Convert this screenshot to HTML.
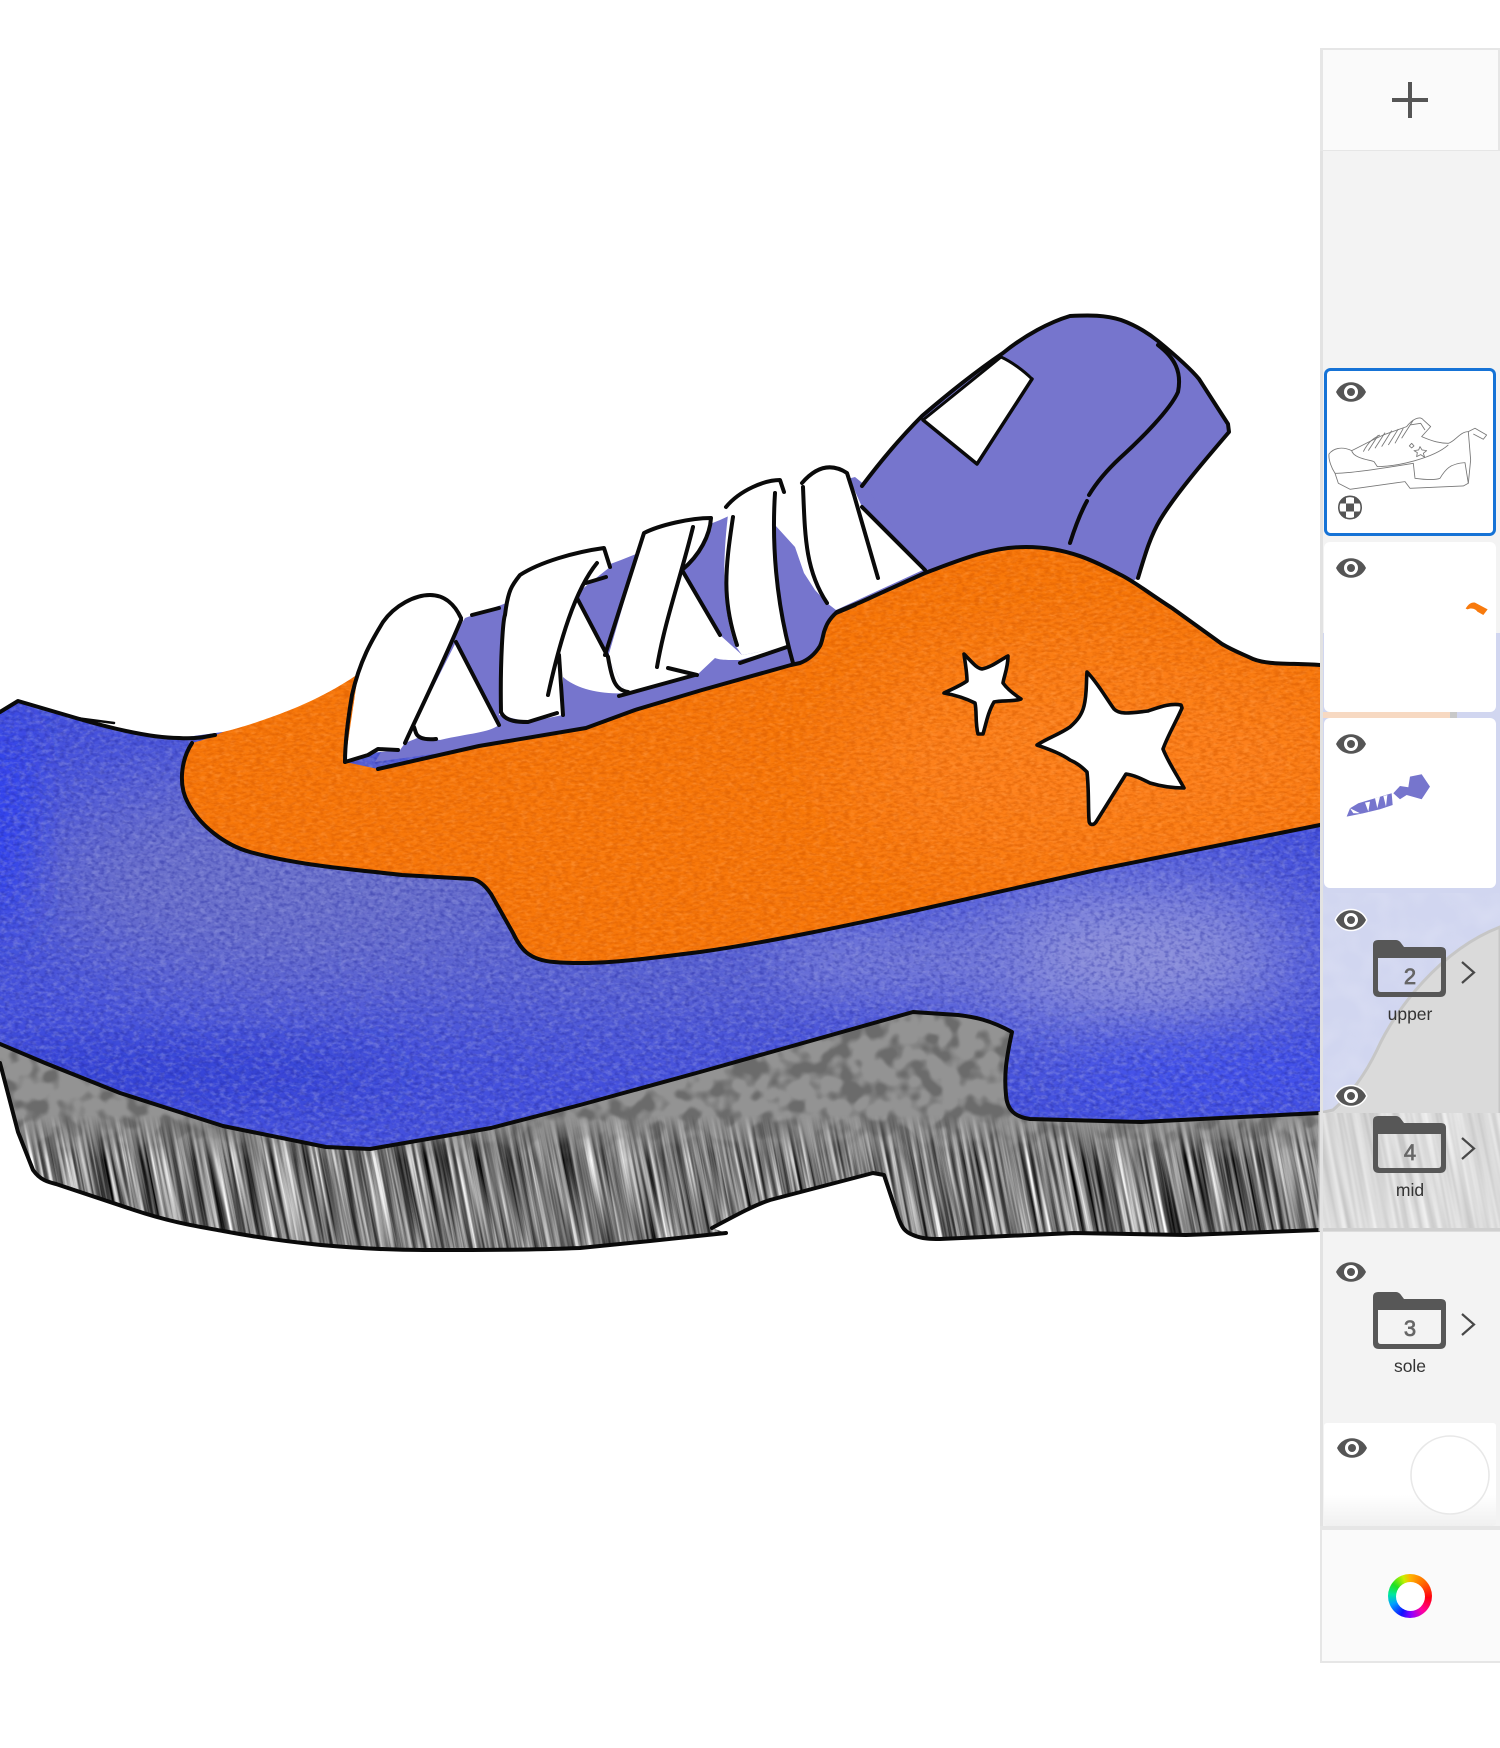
<!DOCTYPE html>
<html><head><meta charset="utf-8"><style>
html,body{margin:0;padding:0;background:#fff;width:1500px;height:1748px;overflow:hidden}
svg{display:block;font-family:"Liberation Sans",sans-serif}
#wheel{position:absolute;left:1388px;top:1574px;width:44px;height:44px;border-radius:50%;background:conic-gradient(#ffb400 0deg,#ff6a00 45deg,#ff0010 95deg,#ff00a0 140deg,#9000ff 175deg,#1010ff 205deg,#00a0ff 245deg,#00e8a0 275deg,#20e020 305deg,#c8f000 340deg,#ffb400 360deg)}
#wheel:after{content:"";position:absolute;left:7.5px;top:7.5px;width:29px;height:29px;border-radius:50%;background:#fff}
</style></head><body>
<svg width="1500" height="1748" viewBox="0 0 1500 1748" xmlns="http://www.w3.org/2000/svg">
<defs>
<filter id="nOrange" color-interpolation-filters="sRGB" x="0" y="0" width="100%" height="100%"><feTurbulence type="fractalNoise" baseFrequency="0.16 0.36" numOctaves="3" seed="4"/><feColorMatrix values="0 0 0 0 .85  0 0 0 0 .36  0 0 0 0 0  2.8 0 0 0 -1.1"/></filter>
<filter id="nOrangeL" color-interpolation-filters="sRGB" x="0" y="0" width="100%" height="100%"><feTurbulence type="fractalNoise" baseFrequency="0.14 0.3" numOctaves="2" seed="9"/><feColorMatrix values="0 0 0 0 1  0 0 0 0 .6  0 0 0 0 .26  2.6 0 0 0 -1.15"/></filter>
<filter id="nBlue" color-interpolation-filters="sRGB" x="0" y="0" width="100%" height="100%"><feTurbulence type="fractalNoise" baseFrequency="0.15 0.24" numOctaves="3" seed="7"/><feColorMatrix values="0 0 0 0 .6  0 0 0 0 .62  0 0 0 0 .88  2.8 0 0 0 -1.2"/></filter>
<filter id="nBlueD" color-interpolation-filters="sRGB" x="0" y="0" width="100%" height="100%"><feTurbulence type="fractalNoise" baseFrequency="0.2 0.28" numOctaves="2" seed="3"/><feColorMatrix values="0 0 0 0 .14  0 0 0 0 .16  0 0 0 0 .62  2.8 0 0 0 -1.25"/></filter>
<filter id="nGray" color-interpolation-filters="sRGB" x="0" y="0" width="100%" height="100%"><feTurbulence type="fractalNoise" baseFrequency="0.05" numOctaves="2" seed="12"/><feColorMatrix values="0 0 0 0 .42  0 0 0 0 .42  0 0 0 0 .42  6 0 0 0 -2.8"/><feGaussianBlur stdDeviation=".8"/></filter>
<filter id="nStreak" color-interpolation-filters="sRGB" x="0" y="0" width="100%" height="100%"><feTurbulence type="fractalNoise" baseFrequency="0.22 0.005" numOctaves="3" seed="6"/><feColorMatrix values="1.5 0 0 0 -.26 1.5 0 0 0 -.26 1.5 0 0 0 -.26 0 0 0 0 1"/></filter>
<filter id="nStreakL" color-interpolation-filters="sRGB" x="0" y="0" width="100%" height="100%"><feTurbulence type="fractalNoise" baseFrequency="0.16 0.005" numOctaves="2" seed="11"/><feColorMatrix values=".28 0 0 0 .72 .28 0 0 0 .72 .28 0 0 0 .72 0 0 0 0 1"/></filter>
<filter id="nFrost" color-interpolation-filters="sRGB" x="0" y="0" width="100%" height="100%"><feTurbulence type="fractalNoise" baseFrequency="0.04" numOctaves="2" seed="5"/><feColorMatrix values="0 0 0 0 1 0 0 0 0 1 0 0 0 0 1 1.6 0 0 0 -.6"/></filter>
<filter id="b40" x="-60%" y="-60%" width="220%" height="220%"><feGaussianBlur stdDeviation="46"/></filter>
<filter id="b25" x="-60%" y="-60%" width="220%" height="220%"><feGaussianBlur stdDeviation="26"/></filter>
<linearGradient id="sm" x1="0" y1="0" x2="0" y2="1"><stop offset="0" stop-color="#000"/><stop offset="1" stop-color="#fff"/></linearGradient>
<mask id="stripeMask" maskUnits="userSpaceOnUse" x="0" y="1000" width="1320" height="260"><rect x="0" y="1000" width="1320" height="115" fill="#000"/><rect x="0" y="1115" width="1320" height="45" fill="url(#sm)"/><rect x="0" y="1160" width="1320" height="100" fill="#fff"/></mask>
<clipPath id="soleClip"><path d="M0,1043 L0,1063 L18,1132 L33,1170 C40,1180 48,1182 56,1184 L134,1210 C170,1222 195,1226 223,1231 C260,1238 290,1242 321,1245 C355,1248 390,1250 424,1250 C480,1250 530,1250 580,1248 L650,1241 L726,1233 L712,1228 C740,1213 755,1205 770,1200 L873,1173 L884,1175 L898,1217 C902,1228 905,1232 913,1235 C922,1239 932,1239 940,1239 L1074,1233 L1186,1235 L1320,1230 L1320,1100 L1000,1000 L650,1000 L200,1060 Z"/></clipPath>
<clipPath id="blueClip"><path d="M0,712 L18,701 L76,718 C110,728 150,738 179,738 L223,732 L1000,780 L1320,800 L1320,1113 L1141,1122 L1030,1119 C1015,1117 1007,1110 1006,1095 C1004,1075 1006,1060 1012,1032 C990,1020 975,1017 958,1015 L913,1012 L700,1072 L580,1105 L491,1128 L370,1149 L326,1147 L223,1126 L120,1093 L45,1063 L0,1044 Z"/></clipPath>
<clipPath id="orangeClip"><path d="M192,743 C181,760 178,785 188,803 C200,826 225,845 250,852 C300,866 360,870 402,875 L473,879 C483,882 488,890 491,894 L513,933 C520,948 528,960 554,962 C600,966 650,958 700,952 C770,942 850,925 918,910 L1096,870 L1320,825 L1320,665 C1290,663 1268,665 1253,659 C1240,653 1232,650 1222,644 L1172,608 C1150,594 1135,582 1121,575 C1100,564 1070,547 1026,547 C990,547 960,560 925,573 L861,602 C850,606 842,608 837,612 C828,620 826,626 824,632 C822,640 822,642 820,646 C815,654 808,660 800,663 L791,665 L702,690 L635,710 L586,728 L479,746 L378,769 L345,762 L358,674 C335,690 310,702 290,710 C265,720 240,728 223,732 C210,738 200,741 192,743Z"/></clipPath>
<clipPath id="frostClip"><rect x="1323" y="1113" width="177" height="117"/></clipPath>
<g id="eye"><path d="M-15,0 C-9,-13 9,-13 15,0 C9,13 -9,13 -15,0Z" fill="#555"/><circle r="7" fill="#fff"/><circle r="4" fill="#555"/></g>
<g id="eyeH"><path d="M-15,0 C-9,-13 9,-13 15,0 C9,13 -9,13 -15,0Z" fill="#555" stroke="#fff" stroke-width="3" paint-order="stroke"/><circle r="7" fill="#fff"/><circle r="4" fill="#555"/></g>
<path id="folder" fill-rule="evenodd" fill="#575757" d="M1373,945 q0,-5 5,-5 h18 q3,0 5,3 l3,4 h37 q5,0 5,5 v39 q0,6 -6,6 h-61 q-6,0 -6,-6 z M1378,958 v31 q0,3 3,3 h57 q3,0 3,-3 v-31 z"/>
<path id="chev" d="M1462,962 L1474,972.5 L1462,983" fill="none" stroke="#484848" stroke-width="2.2" stroke-linejoin="miter"/>
</defs>

<rect width="1500" height="1748" fill="#fff"/>

<!-- sole -->
<g clip-path="url(#soleClip)">
<rect x="0" y="1000" width="1320" height="260" fill="#939393"/>
<rect x="0" y="1000" width="1320" height="260" filter="url(#nGray)"/>
<g mask="url(#stripeMask)"><g transform="rotate(-11 660 1130)"><rect x="-60" y="900" width="1440" height="460" filter="url(#nStreak)"/></g></g>
</g>

<!-- blue upper -->
<g clip-path="url(#blueClip)">
<rect x="0" y="680" width="1320" height="480" fill="#4450dd"/>
<ellipse cx="300" cy="880" rx="270" ry="115" fill="#6b70cb" filter="url(#b40)"/>
<ellipse cx="650" cy="960" rx="240" ry="55" fill="#5f66cf" filter="url(#b40)"/>
<ellipse cx="1130" cy="955" rx="170" ry="70" fill="#9598da" filter="url(#b40)"/>
<ellipse cx="900" cy="960" rx="130" ry="40" fill="#7379d8" filter="url(#b25)"/>
<ellipse cx="1220" cy="1075" rx="160" ry="30" fill="#3f4fee" filter="url(#b25)"/>
<ellipse cx="0" cy="820" rx="26" ry="110" fill="#2c3cf4" filter="url(#b25)"/>
<ellipse cx="170" cy="1075" rx="220" ry="22" fill="#2f3cd4" filter="url(#b25)"/>
<rect x="0" y="680" width="1320" height="480" filter="url(#nBlue)" opacity=".42"/>
<rect x="0" y="680" width="1320" height="480" filter="url(#nBlueD)" opacity=".4"/>
</g>

<!-- tongue / purple -->
<path d="M862,486 C880,462 900,438 922,416 C950,392 975,372 1003,353 C1025,335 1050,322 1070,316 C1090,315 1105,315 1121,320 C1135,325 1148,333 1158,341 C1175,355 1190,368 1199,379 L1228,424 L1229,432 C1205,460 1175,495 1160,520 C1150,537 1145,555 1138,578 L1100,600 L925,580 Z" fill="#7675cd"/>
<path d="M375,762 L465,618 L501,605 L621,560 L720,520 L775,495 L805,490 L855,477 L866,486 L925,575 L840,620 L820,650 L800,668 L702,692 L586,730 L478,748 Z" fill="#7675cd"/>
<path d="M923,420 L1001,357 C1012,362 1024,371 1032,379 L977,464Z" fill="#fff"/>

<!-- laces -->
<g fill="#fff">
<path d="M345,760 C347,720 352,690 363,670 C372,640 378,630 385,623 C400,605 415,595 430,595 C445,595 455,605 461,620 L405,743 L400,750 L371,753 Z"/>
<path d="M456,642 L499,725 C488,733 470,733 440,740 L420,737 L405,743 Z"/>
<path d="M499,715 C502,660 503,630 505,613 C508,590 515,582 519,577 C540,562 575,552 604,548 L610,567 L581,590 L577,598 L608,657 L626,693 C600,695 575,688 563,677 L563,715 L528,722 Z"/>
<path d="M608,657 L644,533 C660,525 690,518 711,518 C710,535 700,555 682,570 L720,635 L742,655 L787,647 L740,660 C725,660 720,660 715,658 L697,675 L626,693 Z"/>
<path d="M729,507 C740,495 760,482 780,480 L784,492 L775,493 C772,540 775,600 787,647 L742,655 L735,645 C722,610 722,560 729,507Z"/>
<path d="M775,493 L802,483 C815,470 830,465 847,473 L862,507 L923,570 L836,610 L827,603 L815,590 L804,573 L795,547 L775,525Z"/>
</g>

<!-- orange -->
<g clip-path="url(#orangeClip)">
<rect x="170" y="540" width="1150" height="430" fill="#f8780a"/>
<ellipse cx="1100" cy="760" rx="260" ry="110" fill="#ff8420" filter="url(#b40)" opacity=".8"/>
<rect x="170" y="540" width="1150" height="430" filter="url(#nOrangeL)" opacity=".5"/>
<rect x="170" y="540" width="1150" height="430" filter="url(#nOrange)" opacity=".55"/>
</g>

<!-- stars -->
<g fill="#fff" stroke="#0a0a0a" stroke-width="3.6" stroke-linejoin="round">
<path d="M964,654 C972,662 976,668 982,669 C992,667 1000,660 1008,656 C1008,668 1004,676 1003,683 C1008,690 1015,695 1021,699 C1012,702 1002,700 994,702 C988,712 986,724 983,734 L978,734 C975,722 977,712 975,703 C965,698 955,695 944,693 C952,689 960,686 967,681 C967,672 965,662 964,654Z"/>
<path d="M1087,672 C1097,682 1106,698 1114,709 C1120,715 1130,713 1148,711 C1160,707 1170,703 1181,705 L1182,708 C1176,722 1168,735 1163,749 C1168,762 1177,775 1184,788 C1172,788 1160,786 1150,783 C1142,779 1134,775 1126,774 C1116,790 1106,806 1096,822 C1093,826 1089,825 1089,820 C1088,805 1089,790 1087,772 C1080,765 1075,762 1070,760 C1060,753 1048,749 1037,745 C1048,738 1060,734 1070,727 C1078,720 1082,714 1084,706 C1087,694 1086,684 1087,672Z"/>
</g>

<!-- black outlines -->
<g fill="none" stroke="#0a0a0a" stroke-width="4" stroke-linecap="round" stroke-linejoin="round">
<path d="M0,712 L18,701 L76,718 C110,728 150,738 179,738 C195,739 205,737 215,735"/>
<path d="M76,718 L114,723" stroke-width="2.5"/>
<path d="M192,743 C181,760 178,785 188,803 C200,826 225,845 250,852 C300,866 360,870 402,875 L473,879 C483,882 488,890 491,894 L513,933 C520,948 528,960 554,962 C600,966 650,958 700,952 C770,942 850,925 918,910 L1096,870 L1320,825"/>
<path d="M378,769 L479,746 L586,728 L635,710 L702,690 L791,665 L800,663 C808,660 815,654 820,646 C822,642 822,640 824,632 C826,626 828,620 837,612 L861,602 L925,573 C960,560 990,547 1026,547 C1070,547 1100,564 1121,575 C1135,582 1150,594 1172,608 L1222,644 C1232,650 1240,653 1253,659 C1268,665 1290,663 1320,665"/>
<!-- sole bottom & blue bottom -->
<path d="M0,1044 L45,1063 L120,1093 L223,1126 L326,1147 L370,1149 L491,1128 L580,1105 L700,1072 L913,1012 C930,1013 945,1014 958,1015 C975,1017 990,1020 1012,1032 C1006,1060 1004,1075 1006,1095 C1007,1110 1015,1117 1030,1119 L1141,1122 L1320,1113"/>
<path d="M0,1063 L18,1132 L33,1170 C40,1180 48,1182 56,1184 L134,1210 C170,1222 195,1226 223,1231 C260,1238 290,1242 321,1245 C355,1248 390,1250 424,1250 C480,1250 530,1250 580,1248 L650,1241 L726,1233"/>
<path d="M712,1228 C740,1213 755,1205 770,1200 L873,1173 L884,1175 L898,1217 C902,1228 905,1232 913,1235 C922,1239 932,1239 940,1239 L1074,1233 L1186,1235 L1320,1230"/>
<!-- tongue -->
<path d="M862,486 C880,462 900,438 922,416 C950,392 975,372 1003,353 C1025,335 1050,322 1070,316 C1090,315 1105,315 1121,320 C1135,325 1148,333 1158,341 C1175,355 1190,368 1199,379 L1228,424 L1229,432 C1205,460 1175,495 1160,520 C1150,537 1145,555 1138,578"/>
<path d="M1158,345 C1175,358 1182,372 1178,392 C1170,410 1140,440 1120,458 C1105,472 1095,485 1089,495"/>
<path d="M1087,501 C1082,510 1077,521 1070,543"/>
<path d="M923,420 L977,464 L1032,379" stroke-width="3.5"/>
<path d="M1001,357 C1012,362 1024,371 1032,379" stroke-width="3"/>
<path d="M923,420 L1001,357" stroke-width="3"/>
<path d="M862,507 L925,570"/>
<!-- laces -->
<g stroke-width="4">
<path d="M345,762 C345,745 347,725 352,695 C360,660 372,640 383,622 C395,605 415,595 430,595 C445,595 455,605 461,618"/>
<path d="M461,620 C440,670 420,710 405,743"/>
<path d="M345,762 L368,755 L378,749 L398,750"/>
<path d="M456,642 L499,725"/>
<path d="M414,727 L416,733 C418,738 425,740 436,739"/>
<path d="M472,615 L499,608"/>
<path d="M501,712 C500,660 503,620 505,615 C508,590 512,585 520,575 C540,562 575,552 604,548 L610,567"/>
<path d="M501,712 C505,722 520,722 528,722 L557,713"/>
<path d="M597,563 C575,590 560,640 548,695"/>
<path d="M559,655 L563,715"/>
<path d="M586,583 L606,577"/>
<path d="M577,598 L608,657"/>
<path d="M608,657 C612,680 615,690 628,692"/>
<path d="M619,696 L695,675"/>
<path d="M668,668 L697,675"/>
<path d="M605,655 L644,533 C660,525 690,518 711,518 C710,535 700,555 682,570"/>
<path d="M693,527 C680,580 665,620 657,667"/>
<path d="M682,570 L720,635"/>
<path d="M733,517 C725,570 722,600 737,645"/>
<path d="M726,507 C740,490 765,480 780,480 L784,492"/>
<path d="M775,493 C772,540 775,600 793,663"/>
<path d="M740,663 L787,647"/>
<path d="M803,487 C805,535 805,570 827,603"/>
<path d="M802,483 C815,468 830,462 847,473 L854,495 L878,578"/>
<path d="M836,613 L855,605"/>
</g>
</g>

<!-- right panel -->
<rect x="1320" y="48" width="180" height="1615" fill="#f3f3f3"/>
<!-- frosted backdrop -->
<rect x="1323" y="633" width="177" height="480" fill="#d1d6f0"/>
<rect x="1323" y="893" width="177" height="220" filter="url(#nFrost)" opacity=".18"/>
<rect x="1323" y="712" width="127" height="6" fill="#f7d9c2"/>
<rect x="1450" y="712" width="7" height="6" fill="#c8c8c8"/>
<path d="M1500,927 C1440,950 1395,1010 1377,1050 C1365,1075 1350,1095 1333,1110 L1320,1113 L1320,1230 L1500,1230Z" fill="#dadada" stroke="#c6c6c6" stroke-width="3"/>
<g clip-path="url(#frostClip)"><g transform="rotate(-11 1410 1170)"><rect x="1280" y="1060" width="260" height="220" filter="url(#nStreakL)"/></g></g>
<rect x="1320" y="1228" width="180" height="3" fill="#cfcfcf"/>
<rect x="1320" y="48" width="3" height="1615" fill="#e2e2e2"/>

<!-- add button -->
<rect x="1320" y="48" width="180" height="103" fill="#e6e6e6"/>
<rect x="1323" y="50" width="175" height="100" fill="#fafafa"/>
<path d="M1392,100 H1428 M1410,82 V118" stroke="#555" stroke-width="4"/>

<!-- selected layer -->
<rect x="1325.5" y="369.5" width="169" height="165" rx="5" fill="#fff" stroke="#1673d6" stroke-width="3"/>
<use href="#eye" x="1351" y="392"/>
<g transform="translate(1300,30) scale(.3333)" fill="none" stroke="#777" stroke-width="2.6" stroke-linejoin="round">
<path d="M87,1272 C100,1255 125,1248 155,1262 C180,1250 200,1238 250,1215 L320,1190 C335,1170 360,1155 370,1170 L392,1190 L365,1220 C400,1235 420,1240 445,1240 C465,1235 480,1205 505,1205 L512,1290 L505,1360 L490,1368 L330,1375 L315,1355 L150,1378 L115,1360 L105,1330 C95,1315 85,1290 87,1272Z"/>
<path d="M155,1262 C160,1285 210,1290 222,1295 L232,1310 C290,1310 400,1285 445,1245"/>
<path d="M105,1330 C160,1330 280,1310 340,1300 L345,1345 C380,1350 410,1350 420,1345 C435,1320 450,1300 495,1298 L505,1360"/>
<path d="M190,1265 C205,1235 220,1225 240,1215 M205,1262 L235,1215 M225,1255 L255,1208 M245,1250 L275,1202 M265,1245 L295,1197 M285,1240 L310,1195 M305,1225 L340,1170 M330,1185 L362,1180 L375,1200"/>
<path d="M335,1240 l7,8 l-7,6 l-7,-6z M360,1250 l6,10 l14,2 l-10,8 l4,12 l-12,-8 l-12,6 l2,-12 l-10,-6 l14,-2z"/>
<path d="M505,1205 L525,1195 L560,1215 L550,1228 L520,1212" />
</g>
<circle cx="1350" cy="507.5" r="12" fill="#fff"/>
<clipPath id="ck"><circle cx="1350" cy="507.5" r="12"/></clipPath>
<g clip-path="url(#ck)" fill="#555"><rect x="1338" y="495.5" width="8" height="8"/><rect x="1354" y="495.5" width="8" height="8"/><rect x="1346" y="503.5" width="8" height="8"/><rect x="1338" y="511.5" width="8" height="8"/><rect x="1354" y="511.5" width="8" height="8"/></g>
<circle cx="1350" cy="507.5" r="11.2" fill="none" stroke="#555" stroke-width="1.6"/>

<!-- layer 2 -->
<rect x="1324" y="542" width="172" height="170" rx="6" fill="#fff"/>
<use href="#eye" x="1351" y="568"/>
<g transform="translate(1300,530) scale(.3333)">
<path d="M497,236 C505,222 515,216 525,218 L563,238 L550,255 L532,245 C528,238 515,232 503,238Z" fill="#f87a0d"/>
</g>

<!-- layer 3 -->
<rect x="1324" y="718" width="172" height="170" rx="6" fill="#fff"/>
<use href="#eye" x="1351" y="744"/>
<g transform="translate(1300,530) scale(.3333)" fill="#7675cd">
<path d="M280,790 L300,768 L325,772 L330,740 L365,733 L390,770 L365,808 L320,795 L300,808Z"/>
<path d="M140,860 L150,835 L175,820 L275,790 L278,825 L240,838 L190,850Z"/>
<path d="M150,835 L180,850 L160,850Z" fill="#fff"/>
<path d="M195,818 L205,845 L210,815Z M225,805 L232,835 L240,800Z M250,798 L258,830 L262,795Z" fill="#fff"/>
</g>

<!-- folder layers -->
<use href="#eyeH" x="1351" y="920"/>
<use href="#folder"/>
<text x="1410" y="984" font-size="22" fill="#666" stroke="#666" stroke-width=".7" text-anchor="middle">2</text>
<use href="#chev"/>
<text x="1410" y="1020" font-size="17.5" fill="#333" text-anchor="middle">upper</text>

<use href="#eyeH" x="1351" y="1096"/>
<use href="#folder" y="176"/>
<text x="1410" y="1160" font-size="22" fill="#666" stroke="#666" stroke-width=".7" text-anchor="middle">4</text>
<use href="#chev" y="176"/>
<text x="1410" y="1196" font-size="17.5" fill="#333" text-anchor="middle">mid</text>

<use href="#eye" x="1351" y="1272"/>
<use href="#folder" y="352"/>
<text x="1410" y="1336" font-size="22" fill="#666" stroke="#666" stroke-width=".7" text-anchor="middle">3</text>
<use href="#chev" y="352"/>
<text x="1410" y="1372" font-size="17.5" fill="#333" text-anchor="middle">sole</text>

<!-- bottom layer -->
<linearGradient id="fade" x1="0" y1="0" x2="0" y2="1"><stop offset="0" stop-color="#fff"/><stop offset=".7" stop-color="#fff"/><stop offset="1" stop-color="#f0f0f0"/></linearGradient>
<rect x="1324" y="1423" width="172" height="103" rx="3" fill="url(#fade)"/>
<use href="#eye" x="1352" y="1448"/>
<circle cx="1450" cy="1475" r="39" fill="#fff" stroke="#e8e8e8" stroke-width="1.6"/>

<!-- color section -->
<rect x="1320" y="1526" width="180" height="137" fill="#e6e6e6"/>
<rect x="1322" y="1530" width="178" height="131" fill="#fafafa"/>
</svg>
<div id="wheel"></div>
</body></html>
